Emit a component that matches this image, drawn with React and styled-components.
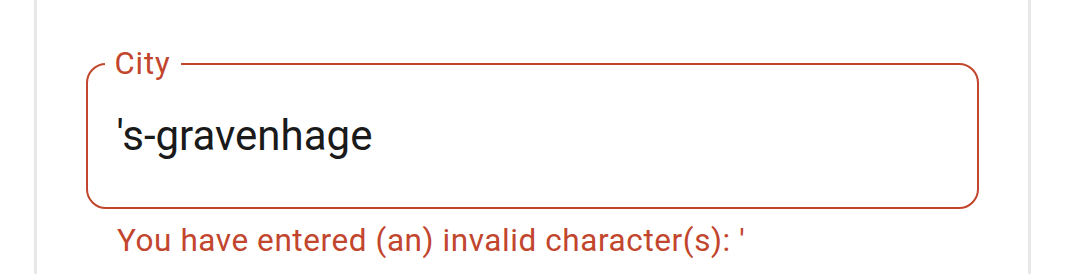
import React from "react";
import styled, { createGlobalStyle } from "styled-components";

const ERROR = "#c2452d";

const GlobalStyle = createGlobalStyle`
  html, body {
    margin: 0;
    padding: 0;
    background: #ffffff;
  }
  body {
    font-family: Roboto, "Noto Sans", "Liberation Sans", sans-serif;
    -webkit-font-smoothing: antialiased;
  }
  * { box-sizing: border-box; }
`;

const Page = styled.div`
  width: 1072px;
  height: 274px;
  overflow: hidden;
  padding-left: 34px;
`;

const Card = styled.section`
  width: 997px;
  min-height: 300px;
  background: #ffffff;
  border-left: 3px solid #e8e8e8;
  border-right: 3px solid #e8e8e8;
  padding: 47px 49px 0 49px;
`;

const Field = styled.div`
  display: flex;
  flex-direction: column;
`;

const Outline = styled.fieldset`
  margin: 0;
  min-width: 0;
  border: 2.5px solid ${ERROR};
  border-radius: 20px;
  padding: 0 0 0 16.5px;
`;

const Label = styled.legend`
  padding: 0 10px 0 10px;
  font-size: 31px;
  line-height: 34px;
  color: ${ERROR};
  letter-spacing: 0.9px;
`;

const Input = styled.input`
  display: block;
  width: 100%;
  border: none;
  outline: none;
  background: transparent;
  font-family: inherit;
  font-size: 42px;
  line-height: 48px;
  height: 126px;
  padding: 30px 12px 48px 12px;
  margin: 0;
  color: #1a1a1a;
`;

const Helper = styled.p`
  margin: 14px 0 0 31px;
  font-size: 31.5px;
  line-height: 36px;
  letter-spacing: 0.58px;
  color: ${ERROR};
`;

export default function App() {
  return (
    <>
      <GlobalStyle />
      <Page>
        <Card>
          <Field>
            <Outline>
              <Label>City</Label>
              <Input type="text" readOnly value="'s-gravenhage" aria-invalid="true" />
            </Outline>
            <Helper>You have entered (an) invalid character(s): '</Helper>
          </Field>
        </Card>
      </Page>
    </>
  );
}
